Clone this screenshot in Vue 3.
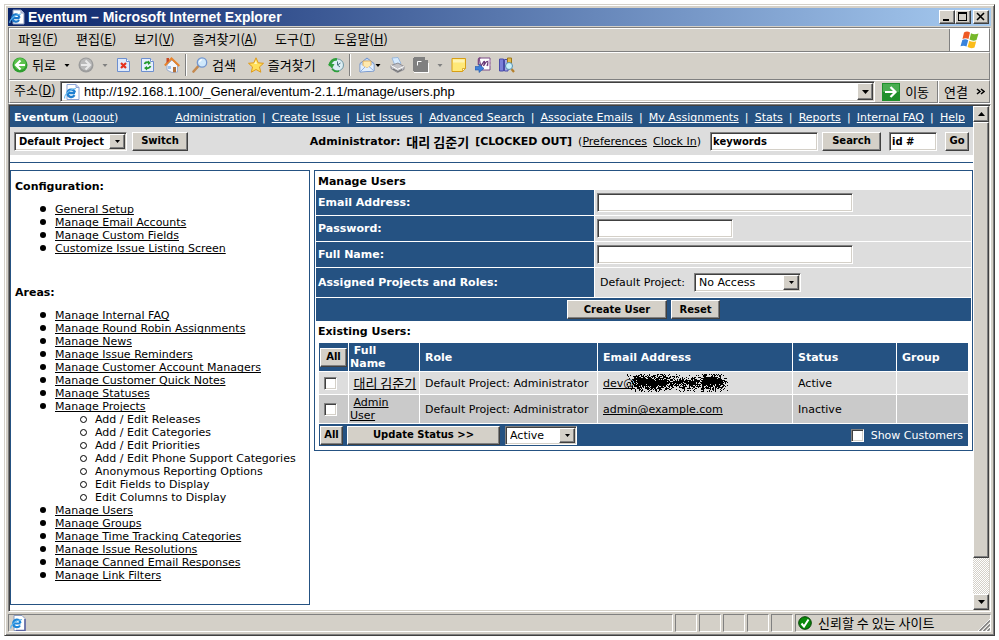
<script setup>
import { ref } from 'vue'

const menus = [
  { label: '파일', key: 'F' },
  { label: '편집', key: 'E' },
  { label: '보기', key: 'V' },
  { label: '즐겨찾기', key: 'A' },
  { label: '도구', key: 'T' },
  { label: '도움말', key: 'H' },
]

const navLinks = [
  'Administration', 'Create Issue', 'List Issues', 'Advanced Search', 'Associate Emails',
  'My Assignments', 'Stats', 'Reports', 'Internal FAQ', 'Help',
]

const configLinks = [
  'General Setup', 'Manage Email Accounts', 'Manage Custom Fields', 'Customize Issue Listing Screen',
]

const areaLinks = [
  { label: 'Manage Internal FAQ' },
  { label: 'Manage Round Robin Assignments' },
  { label: 'Manage News' },
  { label: 'Manage Issue Reminders' },
  { label: 'Manage Customer Account Managers' },
  { label: 'Manage Customer Quick Notes' },
  { label: 'Manage Statuses' },
  {
    label: 'Manage Projects',
    children: [
      'Add / Edit Releases', 'Add / Edit Categories', 'Add / Edit Priorities',
      'Add / Edit Phone Support Categories', 'Anonymous Reporting Options',
      'Edit Fields to Display', 'Edit Columns to Display',
    ],
  },
  { label: 'Manage Users' },
  { label: 'Manage Groups' },
  { label: 'Manage Time Tracking Categories' },
  { label: 'Manage Issue Resolutions' },
  { label: 'Manage Canned Email Responses' },
  { label: 'Manage Link Filters' },
]

const users = [
  { name: '대리 김준기', korean: true, role: 'Default Project: Administrator', email: 'dev@', masked: true, status: 'Active' },
  { name: 'Admin User', role: 'Default Project: Administrator', email: 'admin@example.com', status: 'Inactive' },
]

// Spray of single dots that covers the masked part of an address.
function spray(width, height) {
  let seed = 7
  const random = () => {
    seed = (seed * 16807) % 2147483647
    return seed / 2147483647
  }
  let d = ''
  for (let y = 0; y < height; y++) {
    for (let x = 0; x < width; x++) {
      const edge = 1 - Math.abs(y - height / 2 + 1) / (height / 2)
      const ends = Math.min(1, (x + 1) / 14, (width - x) / 8)
      const blob = (x > 6 && x < 40) || (x > 74 && x < 94) ? 0.3 : 0.05
      if (random() < (edge * 0.85 + blob) * ends) d += `M${x} ${y}h1v1h-1z`
    }
  }
  return d
}
const sprayPath = spray(102, 18)

const address = ref('http://192.168.1.100/_General/eventum-2.1.1/manage/users.php')
const keywords = ref('keywords')
const issueId = ref('id #')
const statusCells = 5
</script>

<template>
  <div class="desktop">
    <div class="window">
      <header class="titlebar">
        <svg class="icon" viewBox="0 0 16 16" aria-hidden="true">
          <path d="M4 1h8l3 3v11H4z" fill="#fff" stroke="#8c9cc0" />
          <path d="M12 1v3h3" fill="#c7d3ee" stroke="#8c9cc0" />
          <path d="M10.6 9.2H3.2a3.6 3.6 0 0 1 7.2-.4M3.2 9a3.7 3.7 0 0 0 6.8 2" fill="none" stroke="#1c77c9" stroke-width="2.2" />
          <path d="M1 14c-1-2 3-8 11-9" fill="none" stroke="#5bb4ee" stroke-width="1.2" />
        </svg>
        <h1>Eventum – Microsoft Internet Explorer</h1>
        <div class="caption">
          <button class="cap" aria-label="Minimize"><svg viewBox="0 0 12 10"><path d="M2 7h6v2H2z" /></svg></button>
          <button class="cap" aria-label="Maximize"><svg viewBox="0 0 12 10"><path d="M1 0h9v9H1zM2 2v6h7V2z" fill-rule="evenodd" /></svg></button>
          <button class="cap close" aria-label="Close"><svg viewBox="0 0 12 10"><path d="M2 1l7 7M9 1L2 8" stroke="#000" stroke-width="1.6" /></svg></button>
        </div>
      </header>

      <div class="bands">
        <div class="band menu-band">
          <nav class="menus">
            <button v-for="m in menus" :key="m.key" class="plain">{{ m.label }}(<u>{{ m.key }}</u>)</button>
          </nav>
          <div class="flag">
            <svg viewBox="0 0 20 18" aria-hidden="true">
              <path d="M4 1.5Q7-.5 10 1.5L8.500 8Q5.500 6.500 2.500 8Z" fill="#ee5a24" />
              <path d="M11 2.200Q14.500 4 18.500 2.400L16.500 9Q13 10.500 9.500 8.600Z" fill="#76b82a" />
              <path d="M2.300 9Q5.300 7.500 8.200 9.200L6.500 15.500Q3.500 14 .5 15.300Z" fill="#3a83dc" />
              <path d="M9.300 9.800Q12.500 11.600 16.200 10.200L14.500 16.500Q11 18 7.600 16Z" fill="#fbbc1a" />
            </svg>
          </div>
        </div>

        <div class="band tool-band">
          <button class="plain tool">
            <svg class="icon" viewBox="0 0 16 16">
              <circle cx="8" cy="8" r="7.500" fill="#2f9e2f" />
              <circle cx="8" cy="7" r="6" fill="#5cc24c" />
              <path d="M8.500 3.500L4 8l4.500 4.500M4.500 8H13" fill="none" stroke="#fff" stroke-width="2.200" />
            </svg>
            뒤로
          </button>
          <svg class="caret" viewBox="0 0 6 16"><path d="M.5 7h5L3 10z" /></svg>
          <button class="plain tool" aria-label="앞으로">
            <svg class="icon" viewBox="0 0 16 16">
              <circle cx="8" cy="8" r="7.500" fill="#9c9c9c" />
              <circle cx="8" cy="7.500" r="6" fill="#b9b9b9" />
              <path d="M7.500 3.500L12 8l-4.500 4.500M11.500 8H3" fill="none" stroke="#e9e9e9" stroke-width="2" />
            </svg>
          </button>
          <svg class="caret dim" viewBox="0 0 6 16"><path d="M.5 7h5L3 10z" /></svg>
          <button class="plain tool" aria-label="중지">
            <svg class="icon" viewBox="0 0 16 16">
              <path d="M1.500 1.500h9l3 3v10h-12z" fill="#dfeafb" stroke="#6d8fcf" />
              <path d="M10.500 1.500v3h3" fill="#fff" stroke="#6d8fcf" />
              <path d="M5 6l5 5M10 6l-5 5" stroke="#e5301c" stroke-width="2.200" />
            </svg>
          </button>
          <button class="plain tool" aria-label="새로 고침">
            <svg class="icon" viewBox="0 0 16 16">
              <path d="M1.500 1.500h9l3 3v10h-12z" fill="#e6effc" stroke="#6d8fcf" />
              <path d="M10.500 1.500v3h3" fill="#fff" stroke="#6d8fcf" />
              <path d="M4.500 7q1-2.500 4.500-1.500M10.500 9q-1 3-4.500 2" fill="none" stroke="#239a2c" stroke-width="1.800" />
              <path d="M8 3.500l3 2.500-3 2zM7 9l-3 2 3 2.500z" fill="#239a2c" />
            </svg>
          </button>
          <button class="plain tool" aria-label="홈">
            <svg class="icon" viewBox="0 0 16 16">
              <path d="M3 8l5-5 5.500 5.500V15L8 15.500 3 13z" fill="#f3f6fc" stroke="#8ca2cc" stroke-width=".8" />
              <path d="M9 10h3v5.300H9z" fill="#b2703a" />
              <path d="M4 9h3v3H4z" fill="#9fc4ee" />
              <path d="M.8 8.500L7.500 1.500 15.300 9" fill="none" stroke="#e8842c" stroke-width="2" />
              <path d="M2.500 1h2.500v3l-2.500 2z" fill="#c84a28" />
            </svg>
          </button>
          <i class="etch"></i>
          <button class="plain tool wide">
            <svg class="icon" viewBox="0 0 16 16">
              <path d="M1.500 14.500L6 9.500" stroke="#c4894f" stroke-width="2.600" stroke-linecap="round" />
              <circle cx="10" cy="5.500" r="4.700" fill="#cfe8fb" stroke="#7396cf" stroke-width="1.300" />
              <path d="M7.500 5q.5-2 2.500-2.300" fill="none" stroke="#fff" stroke-width="1.300" />
            </svg>
            검색
          </button>
          <button class="plain tool wide">
            <svg class="icon" viewBox="0 0 16 16">
              <path d="M8 .8l2.200 5 5.300.5-4 3.600 1.300 5.300L8 12.500l-4.700 2.700 1.200-5.300L.5 6.300l5.300-.5z" fill="#ffe05a" stroke="#e09a1c" />
              <path d="M8 3.500L9 7H6z" fill="#fff7c4" />
            </svg>
            즐겨찾기
          </button>
          <button class="plain tool" aria-label="목록">
            <svg class="icon" viewBox="0 0 16 16">
              <circle cx="9.500" cy="8" r="6" fill="#dceef4" stroke="#6f97a3" />
              <path d="M9.500 4.500V8l3-2M9.500 8l2.500 2" fill="none" stroke="#45707c" />
              <path d="M2 9a6 6 0 0 1 7-6.500" fill="none" stroke="#2fa03c" stroke-width="2.600" />
              <path d="M0 7h6.500L4 11.500z" fill="#2fa03c" />
              <path d="M4 12q3 3.500 7 2" fill="none" stroke="#2fa03c" stroke-width="1.600" />
            </svg>
          </button>
          <i class="etch"></i>
          <div class="tool-group">
            <button class="plain tool" aria-label="메일">
              <svg class="icon" viewBox="0 0 16 16">
                <path d="M1 6.500L8 1l7 5.500v7.500L1 15z" fill="#bcd6f6" stroke="#6f92cd" />
                <path d="M4 4h8v5l-4 2-4-2z" fill="#ffe9ae" stroke="#dfa54c" stroke-width=".8" />
                <path d="M1.500 7.500L8 11l6.500-4v6.800L1.500 14.500z" fill="#e2effd" />
                <path d="M1.500 14.500L6 10M14.500 13.500L10 9.500" stroke="#7fa2d8" stroke-width=".8" />
              </svg>
            </button>
            <svg class="caret" viewBox="0 0 6 16"><path d="M.5 7h5L3 10z" /></svg>
          </div>
          <button class="plain tool" aria-label="인쇄">
            <svg class="icon" viewBox="0 0 16 16">
              <path d="M3 1l6-.5 3 6-6 2z" fill="#d6ebff" stroke="#8cafd9" stroke-width=".8" />
              <path d="M2 8.500L9 6l6 3.500v3L8.500 15.500 2 11.500z" fill="#c2c2c6" stroke="#7e7e86" stroke-width=".8" />
              <path d="M2 8.500l6.500 3.800L15 9.500" fill="none" stroke="#fff" />
              <path d="M4 12l5 2.500 4-2" fill="none" stroke="#666" />
            </svg>
          </button>
          <button class="plain tool" aria-label="편집">
            <svg class="icon" viewBox="0 0 16 16">
              <path d="M1 15v1h15V6h-1v9z" fill="#fff" />
              <path d="M1 0h11v3h3v12H1v-1H0V1h1z" fill="#808080" />
              <path d="M4.500 8.500v-4h4" fill="none" stroke="#fff" />
            </svg>
          </button>
          <svg class="caret dim" viewBox="0 0 6 16"><path d="M.5 7h5L3 10z" /></svg>
          <button class="plain tool" aria-label="메모">
            <svg class="icon" viewBox="0 0 16 16">
              <path d="M1 1.500h13.500v10l-3 3H1z" fill="#ffe878" stroke="#d79e16" />
              <path d="M2 2.500h11.500v3H2z" fill="#fff4b4" />
              <path d="M11.500 14.500v-3h3z" fill="#fffbe0" stroke="#d79e16" stroke-width=".8" />
            </svg>
          </button>
          <button class="plain tool" aria-label="전자 필기장">
            <svg class="icon" viewBox="0 0 16 16">
              <path d="M4 1h11v12H7z" fill="#fff" stroke="#7d4c86" />
              <path d="M3.500 8V3q0-2 2-2" fill="none" stroke="#7d4c86" stroke-width="1.600" />
              <path d="M6 9q3-5 3.500-4.500T8.500 9q3-5 4-4.500T12 9" fill="none" stroke="#6b3a78" stroke-width="1.300" />
              <path d="M14.500 3v2M14.500 7v2" stroke="#c8a3d0" stroke-width="2" />
              <path d="M0 9.500h4V7l5 4.500-5 4V13H0z" fill="#3f7fd9" stroke="#2457a8" stroke-width=".6" />
            </svg>
          </button>
          <button class="plain tool" aria-label="참조">
            <svg class="icon" viewBox="0 0 16 16">
              <path d="M.5 2h4v12h-4z" fill="#7a7ed8" stroke="#4a4da8" />
              <path d="M5.500 2.500h3.500v11.500H5.500z" fill="#a9abe9" stroke="#4a4da8" />
              <path d="M8.500 1h4v5h-4z" fill="#e4b94a" stroke="#9c7a1a" />
              <path d="M12.500 12l2.500 3" stroke="#b5802c" stroke-width="2.200" />
              <circle cx="10" cy="9" r="3.500" fill="#c9f0fa" stroke="#5a8fae" />
            </svg>
          </button>
        </div>

        <div class="band address-band">
          <label class="address-label" for="address">주소(<u>D</u>)</label>
          <div class="sunken address-field">
            <svg class="icon" viewBox="0 0 16 16" aria-hidden="true">
              <path d="M3 .5h9l3 3v12H3z" fill="#fff" stroke="#8ea5d6" />
              <path d="M12 .5v3h3" fill="#c7d3ee" stroke="#8ea5d6" />
              <path d="M11 9H3.500a3.800 3.800 0 0 1 7.500-.4M3.500 9a3.800 3.800 0 0 0 7 2.200" fill="none" stroke="#1f7fd0" stroke-width="2.300" />
              <path d="M1 14.500c-1.500-2 3-9 11-10" fill="none" stroke="#6bbcf0" stroke-width="1.200" />
            </svg>
            <input id="address" v-model="address" type="text" />
            <button class="drop" aria-label="주소 목록"><svg viewBox="0 0 7 4"><path d="M0 0h7L3.500 4z" /></svg></button>
          </div>
          <button class="plain go">
            <svg viewBox="0 0 18 18">
              <path d="M0 0h18v18H0z" fill="#1f8f2b" />
              <path d="M1 1h16v8H1z" fill="#49ad50" />
              <path d="M3 9h10.500M8.500 4l5 5-5 5" fill="none" stroke="#fff" stroke-width="2.200" />
            </svg>
            이동
          </button>
          <i class="etch tall"></i>
          <button class="plain links">연결 <svg viewBox="0 0 9 8"><path d="M1 1l3 2.500L1 6M5 1l3 2.500L5 6" fill="none" stroke="#000" stroke-width="1.500" /></svg></button>
        </div>
      </div>

      <div class="viewport">
        <main class="page">
          <div class="topnav">
            <div><b>Eventum</b> (<a href="#">Logout</a>)</div>
            <nav>
              <template v-for="(l, i) in navLinks" :key="l"><span v-if="i">|</span><a href="#">{{ l }}</a></template>
            </nav>
          </div>

          <div class="userbar">
            <span class="select bold project">
              <select aria-label="Project"><option>Default Project</option></select>
              <span class="drop"><svg viewBox="0 0 5 3"><path d="M0 0h5L2.500 3z" /></svg></span>
            </span>
            <button class="btn switch">Switch</button>
            <div class="whoami">
              <b>Administrator:</b>
              <b class="ko">대리 김준기</b>
              <b>[CLOCKED OUT]</b>
              <span>(<a href="#">Preferences</a></span>
              <span><a href="#">Clock In</a>)</span>
            </div>
            <input v-model="keywords" class="sunken field bold keywords" type="text" aria-label="Keywords" />
            <button class="btn search">Search</button>
            <input v-model="issueId" class="sunken field bold issue" type="text" aria-label="Issue id" />
            <button class="btn goto">Go</button>
          </div>
          <hr />

          <div class="columns">
            <aside class="panel side">
              <h2>Configuration:</h2>
              <ul>
                <li v-for="l in configLinks" :key="l"><a href="#">{{ l }}</a></li>
              </ul>
              <h2 class="areas">Areas:</h2>
              <ul>
                <li v-for="l in areaLinks" :key="l.label">
                  <a href="#">{{ l.label }}</a>
                  <ul v-if="l.children" class="sub">
                    <li v-for="c in l.children" :key="c">{{ c }}</li>
                  </ul>
                </li>
              </ul>
            </aside>

            <section class="panel manage">
              <h2>Manage Users</h2>
              <form class="form" @submit.prevent>
                <div class="row">
                  <label for="email">Email Address:</label>
                  <div class="value"><input id="email" class="sunken field long" type="text" /></div>
                </div>
                <div class="row">
                  <label for="password">Password:</label>
                  <div class="value"><input id="password" class="sunken field short" type="password" /></div>
                </div>
                <div class="row">
                  <label for="fullname">Full Name:</label>
                  <div class="value"><input id="fullname" class="sunken field long" type="text" /></div>
                </div>
                <div class="row roles">
                  <label for="role">Assigned Projects and Roles:</label>
                  <div class="value">
                    <span>Default Project:</span>
                    <span class="select access">
                      <select id="role"><option>No Access</option></select>
                      <span class="drop"><svg viewBox="0 0 5 3"><path d="M0 0h5L2.500 3z" /></svg></span>
                    </span>
                  </div>
                </div>
                <div class="actions">
                  <button class="btn create">Create User</button>
                  <button class="btn reset" type="reset">Reset</button>
                </div>
              </form>

              <h2 class="existing">Existing Users:</h2>
              <table>
                <colgroup>
                  <col class="c-check" /><col class="c-name" /><col class="c-role" />
                  <col /><col class="c-status" /><col class="c-group" />
                </colgroup>
                <thead>
                  <tr>
                    <th class="check"><button class="btn all head">All</button></th>
                    <th class="name">&nbsp;Full Name</th>
                    <th>Role</th>
                    <th>Email Address</th>
                    <th>Status</th>
                    <th>Group</th>
                  </tr>
                </thead>
                <tbody>
                  <tr v-for="u in users" :key="u.name">
                    <td class="check"><input type="checkbox" :aria-label="u.name" /></td>
                    <td class="name">&nbsp;<a href="#" :class="{ ko: u.korean }">{{ u.name }}</a></td>
                    <td>{{ u.role }}</td>
                    <td>
                      <a href="#" class="mail">{{ u.email }}<svg v-if="u.masked" class="mask" viewBox="0 0 102 18" aria-hidden="true">
                        <path :d="sprayPath" shape-rendering="crispEdges" />
                      </svg></a>
                    </td>
                    <td>{{ u.status }}</td>
                    <td></td>
                  </tr>
                </tbody>
                <tfoot>
                  <tr>
                    <td colspan="6">
                      <div class="bulk">
                        <button class="btn all">All</button>
                        <button class="btn update">Update Status &gt;&gt;</button>
                        <span class="select status">
                          <select aria-label="Status"><option>Active</option></select>
                          <span class="drop"><svg viewBox="0 0 5 3"><path d="M0 0h5L2.500 3z" /></svg></span>
                        </span>
                        <label class="customers"><input type="checkbox" /> Show Customers</label>
                      </div>
                    </td>
                  </tr>
                </tfoot>
              </table>
            </section>
          </div>
        </main>

        <div class="scrollbar" aria-hidden="true">
          <div class="knob"><svg viewBox="0 0 7 4"><path d="M0 4h7L3.500 0z" /></svg></div>
          <div class="knob thumb"></div>
          <div class="track"></div>
          <div class="knob"><svg viewBox="0 0 7 4"><path d="M0 0h7L3.500 4z" /></svg></div>
        </div>
      </div>

      <footer class="statusbar">
        <div class="cell main">
          <svg class="icon" viewBox="0 0 16 16" aria-hidden="true">
            <path d="M4 .5h8l3 3v12H4z" fill="#fff" stroke="#8c9cc0" />
            <path d="M15 4v11.500H6" fill="none" stroke="#5a63a0" stroke-width="1.500" />
            <path d="M10.600 8.500H3.200a3.600 3.600 0 0 1 7.200-.4M3.200 8.500a3.700 3.700 0 0 0 6.800 2" fill="none" stroke="#1c86d9" stroke-width="2.200" />
            <path d="M1 13.500c-1-2 3-8 11-9" fill="none" stroke="#5bb4ee" stroke-width="1.200" />
          </svg>
        </div>
        <div v-for="n in statusCells" :key="n" class="cell small"></div>
        <div class="cell zone">
          <svg class="ok" viewBox="0 0 14 14" aria-hidden="true">
            <circle cx="7" cy="7" r="6.300" fill="#0a8a0a" stroke="#033f03" />
            <path d="M3.500 7.500L6 10.500 10.500 3.500" fill="none" stroke="#fff" stroke-width="2" />
          </svg>
          <span>신뢰할 수 있는 사이트</span>
          <svg class="grip" viewBox="0 0 12 12" aria-hidden="true">
            <path d="M0 12L12 0M4 12l8-8M8 12l4-4" stroke="#fff" />
            <path d="M1.500 12L12 1.500M5.500 12L12 5.500M9.500 12L12 9.500" stroke="#808080" stroke-width="1.500" />
          </svg>
        </div>
      </footer>
    </div>
  </div>
</template>

<style>
body {
  margin: 0;
  background: #fff;
}
</style>

<style scoped>
*, *::before {
  box-sizing: border-box;
}

.desktop {
  --face: #d4d0c8;
  --shade: #808080;
  --dark: #404040;
  --blue: #255282;
  height: 100vh;
  min-height: 640px;
  padding: 4px;
  color: #000;
  font: 13px/16px "Noto Sans CJK KR", sans-serif;
}

.window {
  display: flex;
  flex-direction: column;
  height: 100%;
  padding: 3px;
  background: var(--face);
  border: 1px solid;
  border-color: var(--face) var(--dark) var(--dark) var(--face);
  box-shadow: inset 1px 1px #fff, inset -1px -1px var(--shade);
}

h1, h2, ul {
  margin: 0;
  padding: 0;
}

button, input, select {
  margin: 0;
  font: inherit;
  color: inherit;
  border-radius: 0;
  outline: 0;
}

svg {
  display: block;
  flex: none;
}

.icon {
  width: 16px;
  height: 16px;
}

/* title bar */
.titlebar {
  display: flex;
  align-items: center;
  gap: 3px;
  height: 18px;
  padding: 0 2px 0 1px;
  background: linear-gradient(to right, #0a246a, #a6caf0);
  color: #fff;
}

.titlebar h1 {
  flex: 1;
  font: bold 14px/16px "Liberation Sans", sans-serif;
}

.caption {
  display: flex;
}

.cap, .drop, .knob {
  display: flex;
  align-items: center;
  justify-content: center;
  padding: 0;
  background: var(--face);
  border: 1px solid;
  border-color: #fff var(--dark) var(--dark) #fff;
  box-shadow: inset -1px -1px var(--shade);
}

.cap {
  width: 16px;
  height: 14px;
}

.cap svg {
  width: 12px;
  height: 10px;
}

.close {
  margin-left: 2px;
}

.drop svg, .knob svg {
  width: 7px;
  height: 4px;
}

/* menu, tool and address bands */
.bands {
  margin-top: 1px;
  border: 1px solid;
  border-color: var(--shade) #fff #fff var(--shade);
}

.band {
  display: flex;
  align-items: center;
  border: 1px solid;
  border-color: #fff var(--shade) var(--shade) #fff;
}

.plain {
  display: flex;
  align-items: center;
  padding: 0;
  background: none;
  border: 0;
  white-space: nowrap;
}

.menu-band {
  height: 24px;
}

.menus {
  display: flex;
  flex: 1;
  gap: 18px;
  padding: 0 0 2px 8px;
}

.flag {
  display: flex;
  align-items: center;
  justify-content: center;
  width: 40px;
  height: 22px;
  background: #fff;
  border-left: 1px solid var(--shade);
}

.flag svg {
  width: 20px;
  height: 18px;
}

.tool-band {
  gap: 8px;
  height: 28px;
  padding: 0 0 2px 2px;
}

.tool {
  gap: 4px;
}

.tool.wide {
  margin-right: 4px;
}

.tool-group {
  display: flex;
  margin-left: 3px;
}

.caret {
  width: 6px;
  height: 16px;
}

.caret.dim {
  fill: var(--shade);
}

.etch {
  width: 2px;
  height: 22px;
  margin: 0 -3px;
  border-left: 1px solid var(--shade);
  border-right: 1px solid #fff;
}

.address-band {
  height: 23px;
  padding-left: 4px;
}

.address-label {
  width: 46px;
  padding-bottom: 3px;
}

.sunken, .select {
  background: #fff;
  border: 1px solid;
  border-color: var(--shade) #fff #fff var(--shade);
  box-shadow: inset 1px 1px var(--dark), inset -1px -1px var(--face);
}

.address-field {
  display: flex;
  flex: 1;
  align-items: center;
  gap: 4px;
  height: 21px;
  padding: 1px 1px 1px 3px;
}

.address-field input {
  flex: 1;
  min-width: 0;
  padding: 0;
  background: none;
  border: 0;
  font: 13px/16px "Liberation Sans", sans-serif;
}

.address-field .drop {
  width: 16px;
  height: 17px;
}

.go {
  gap: 5px;
  padding: 0 8px 0 7px;
}

.go svg {
  width: 18px;
  height: 18px;
}

.etch.tall {
  margin: 0;
}

.links {
  gap: 8px;
  padding: 0 4px 0 5px;
}

.links svg {
  width: 9px;
  height: 8px;
}

/* page */
.viewport {
  display: flex;
  flex: 1;
  min-height: 0;
  padding: 1px;
  background: #fff;
  border: 1px solid;
  border-color: var(--shade) #fff #fff var(--shade);
  box-shadow: inset 1px 1px var(--dark), inset -1px -1px var(--face);
}

.page {
  flex: 1;
  min-width: 0;
  overflow: hidden;
  font: 11px/13px "DejaVu Sans", "Noto Sans CJK KR", sans-serif;
}

a {
  color: inherit;
  text-decoration: underline;
  text-decoration-skip-ink: none;
  text-underline-offset: 1px;
}

.ko {
  font-family: "Noto Sans CJK KR", sans-serif;
  font-size: 13px;
  line-height: 13px;
  white-space: nowrap;
}

.topnav {
  display: flex;
  align-items: center;
  gap: 57px;
  height: 21px;
  padding: 2px 8px 0 4px;
  background: var(--blue);
  color: #fff;
  white-space: nowrap;
}

.topnav nav {
  display: flex;
  flex: 1;
  justify-content: space-between;
}

.userbar {
  display: flex;
  align-items: center;
  height: 28px;
  padding: 0 4px;
  background: #ddd;
  white-space: nowrap;
}

.whoami {
  display: flex;
  flex: 1;
  align-items: center;
  justify-content: flex-end;
  gap: 6px;
}

.select {
  display: inline-flex;
  align-items: stretch;
  height: 19px;
  padding: 1px;
}

.select select {
  flex: 1;
  min-width: 0;
  padding: 0 0 0 3px;
  appearance: none;
  background: none;
  border: 0;
}

.select .drop {
  flex: none;
  width: 16px;
}

.select .drop svg {
  width: 5px;
  height: 3px;
}

.btn {
  height: 19px;
  padding: 0;
  background: var(--face);
  border: 1px solid;
  border-color: #fff var(--dark) var(--dark) #fff;
  box-shadow: inset -1px -1px var(--shade);
  color: #000;
  font: bold 10px/16px "DejaVu Sans", sans-serif;
  white-space: nowrap;
}

.field {
  height: 19px;
  padding: 1px 2px;
}

.bold {
  font-weight: bold;
  font-size: 10px;
}

.project { width: 113px; }
.switch { width: 56px; margin-left: 5px; }
.keywords { width: 108px; margin: 0 4px 0 9px; }
.search { width: 59px; }
.issue { width: 48px; margin: 0 8px; }
.goto { width: 24px; }

hr {
  height: 1px;
  margin: 7px 0;
  background: var(--blue);
  border: 0;
}

.columns {
  display: flex;
  align-items: flex-start;
  gap: 4px;
}

.panel {
  border: 1px solid var(--blue);
}

h2 {
  font-size: 11px;
  line-height: 13px;
}

.side {
  flex: none;
  width: 300px;
  padding: 9px 4px 22px;
}

.side ul {
  padding: 10px 0 0 40px;
  list-style: none;
}

.side li::before {
  content: "";
  display: inline-block;
  width: 6px;
  height: 6px;
  margin: 0 9px 0 -15px;
  vertical-align: 1px;
  background: #000;
  border-radius: 50%;
}

.side .sub {
  padding-top: 0;
}

.side .sub li::before {
  width: 7px;
  height: 7px;
  margin-right: 8px;
  vertical-align: 0;
  background: none;
  border: 1px solid #000;
}

.areas {
  margin-top: 31px;
}

.manage {
  flex: 1;
  min-width: 0;
  padding: 0 1px 3px;
}

.manage h2 {
  padding: 4px 2px 2px;
}

.form {
  display: grid;
  gap: 1px;
}

.row {
  display: grid;
  grid-template-columns: 278px 1fr;
  gap: 1px;
  height: 25px;
}

.row.roles {
  height: 29px;
}

.row label {
  display: flex;
  align-items: center;
  padding-left: 2px;
  background: var(--blue);
  color: #fff;
  font-weight: bold;
}

.value {
  display: flex;
  align-items: center;
  padding: 0 2px;
  background: #ddd;
}

.roles .value {
  gap: 9px;
  padding-left: 5px;
}

.long { width: 256px; }
.short { width: 136px; }
.access { width: 107px; }

.actions {
  display: flex;
  align-items: center;
  justify-content: center;
  gap: 4px;
  height: 23px;
  background: var(--blue);
}

.create { width: 100px; }
.reset { width: 49px; }

.manage .existing {
  padding: 4px 2px;
}

table {
  width: calc(100% - 4px);
  margin: 0 2px;
  border-spacing: 1px;
  border-collapse: separate;
  table-layout: fixed;
}

.c-check { width: 29px; }
.c-name { width: 70px; }
.c-role { width: 177px; }
.c-status { width: 103px; }
.c-group { width: 71px; }

th, td {
  height: 22px;
  padding: 0 0 0 5px;
  text-align: left;
  white-space: nowrap;
}

th {
  height: 28px;
  background: var(--blue);
  color: #fff;
}

td {
  background: #ddd;
}

tbody tr:nth-child(even) td {
  height: 28px;
  background: #cacaca;
}

.name {
  padding: 0 8px 0 1px;
  white-space: normal;
}

.check {
  padding: 0 1px;
}

.check input {
  margin-left: 4px;
}

input[type="checkbox"] {
  display: block;
  width: 13px;
  height: 13px;
  appearance: none;
  background: #fff;
  border: 1px solid;
  border-color: var(--shade) #fff #fff var(--shade);
  box-shadow: inset 1px 1px var(--dark), inset -1px -1px var(--face);
}

.mail {
  display: flex;
  align-items: center;
}

.mask {
  width: 102px;
  height: 18px;
  margin: 0 0 0 -7px;
}

tfoot td {
  padding: 0 5px 0 1px;
  background: var(--blue);
  color: #fff;
}

.bulk {
  display: flex;
  align-items: center;
}

.all { width: 23px; }
.all.head { width: 27px; }
.update { width: 153px; margin: 0 5px 0 4px; }
.status { width: 72px; color: #000; }

.customers {
  display: flex;
  align-items: center;
  gap: 7px;
  margin-left: auto;
}

/* scroll bar */
.scrollbar {
  display: flex;
  flex: none;
  flex-direction: column;
  width: 16px;
}

.knob {
  flex: none;
  height: 16px;
}

.thumb {
  flex: 436 1 0;
}

.track {
  flex: 36 1 0;
  background: repeating-conic-gradient(#fff 0 25%, #d4d0c8 0 50%) 0 0 / 2px 2px;
}

/* status bar */
.statusbar {
  display: flex;
  gap: 2px;
  height: 18px;
  margin-top: 2px;
}

.cell {
  display: flex;
  align-items: center;
  border: 1px solid;
  border-color: var(--shade) #fff #fff var(--shade);
}

.main { flex: 1; padding-left: 1px; }
.small { width: 22px; }

.zone {
  width: 196px;
  gap: 6px;
  padding-left: 2px;
}

.zone span {
  flex: 1;
}

.ok {
  width: 14px;
  height: 14px;
}

.grip {
  width: 12px;
  height: 12px;
  align-self: flex-end;
}
</style>
